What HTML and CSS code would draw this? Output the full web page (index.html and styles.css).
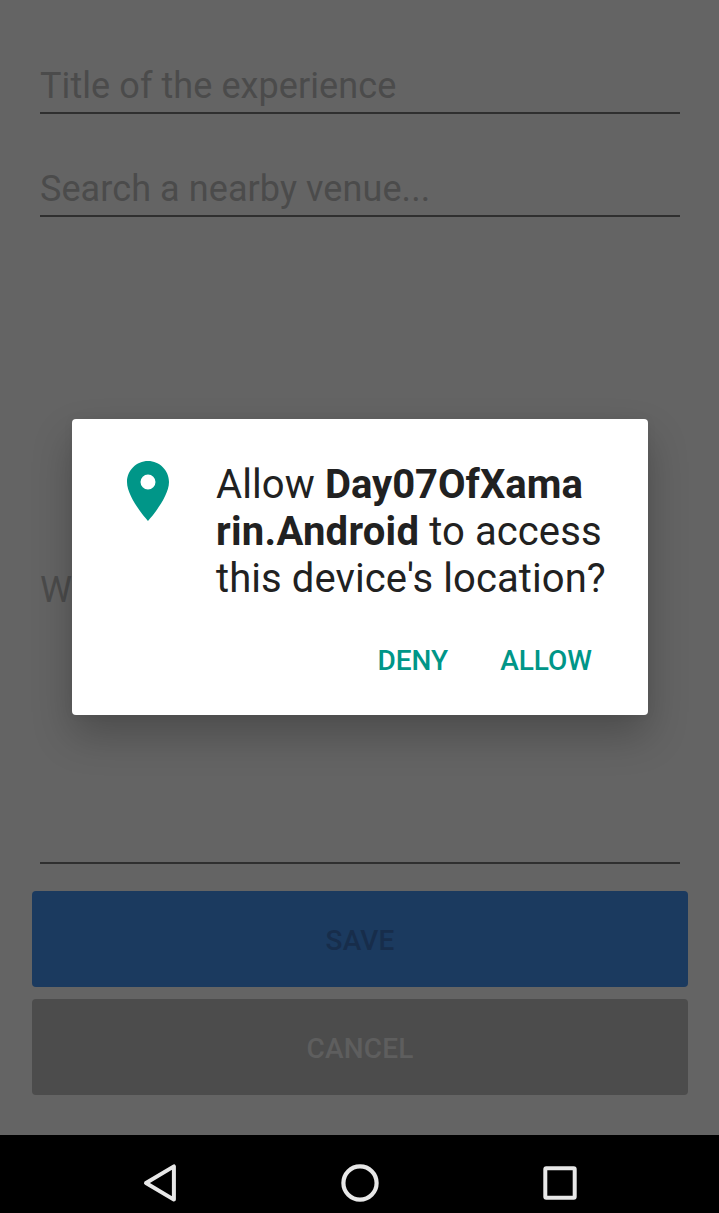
FILE: index.html
```html
<!DOCTYPE html>
<html lang="en">
<head>
<meta charset="utf-8">
<title>New experience</title>
<link rel="stylesheet" href="styles.css">
</head>
<body>
<div class="screen">
  <main class="form">
    <div class="field">Title of the experience</div>
    <div class="field">Search a nearby venue...</div>
    <div class="field field-message">W</div>
    <div class="actions">
      <button class="button button-save">SAVE</button>
      <button class="button button-cancel">CANCEL</button>
    </div>
  </main>
  <nav class="navbar">
    <svg class="nav-icon" viewBox="0 0 48 48"><path d="M10 24 37.9 7.4V40.6Z" fill="none" stroke="#e8e8e8" stroke-width="4" stroke-linejoin="round"/></svg>
    <svg class="nav-icon" viewBox="0 0 48 48"><circle cx="24" cy="24" r="16.6" fill="none" stroke="#e8e8e8" stroke-width="4.2"/></svg>
    <svg class="nav-icon" viewBox="0 0 48 48"><rect x="9.3" y="9.3" width="29.4" height="29.4" rx="1" fill="none" stroke="#e8e8e8" stroke-width="4"/></svg>
  </nav>
  <section class="dialog" role="dialog">
    <div class="dialog-body">
      <svg class="pin" viewBox="5 2 14 20"><path fill="#009688" d="M12 2C8.13 2 5 5.13 5 9c0 5.25 7 13 7 13s7-7.75 7-13c0-3.87-3.13-7-7-7zm0 9.5a2.5 2.5 0 0 1 0-5 2.5 2.5 0 0 1 0 5z"/></svg>
      <p class="dialog-text">Allow <b>Day07OfXama<br><span class="loose">rin.Android</span></b> to access<br>this device's location?</p>
    </div>
    <div class="dialog-actions">
      <span>DENY</span>
      <span>ALLOW</span>
    </div>
  </section>
</div>
</body>
</html>
```
FILE: styles.css
```css
* { box-sizing: border-box; }
body {
  margin: 0;
  font-family: Roboto, sans-serif;
  background: #646464;
}
.screen {
  position: relative;
  display: flex;
  flex-direction: column;
  width: 719px;
  height: 1213px;
  overflow: hidden;
  background: #646464;
}
.form {
  display: flex;
  flex-direction: column;
  height: 1135px;
  padding: 65px 31px 0 32px;
}
.field {
  margin: 0 8px 54px;
  padding-bottom: 5px;
  border-bottom: 2px solid #2f2f2f;
  font-size: 36px;
  line-height: 42px;
  letter-spacing: .08px;
  color: #4b4b4b;
}
.field-message {
  display: flex;
  align-items: center;
  height: 593px;
  margin-bottom: 27px;
  padding: 47px 0 0;
}
.actions {
  display: flex;
  flex-direction: column;
  gap: 12px;
}
.button {
  height: 96px;
  padding: 3px 0 0;
  border: 0;
  border-radius: 4px;
  font: 500 28px/33px Roboto, sans-serif;
  letter-spacing: .15px;
}
.button-save { background: #1b3a5f; color: #172d4b; }
.button-cancel { background: #4c4c4c; color: #5e5e5e; }
.navbar {
  display: flex;
  justify-content: space-between;
  height: 78px;
  padding: 24px 135px 0 136px;
  background: #000;
}
.nav-icon { width: 48px; height: 48px; }
.dialog {
  position: absolute;
  left: 72px;
  top: 419px;
  width: 576px;
  height: 296px;
  padding-top: 42px;
  border-radius: 4px;
  background: #fff;
  box-shadow: 0 20px 40px rgba(0, 0, 0, .24), 0 0 12px rgba(0, 0, 0, .04);
}
.dialog-body {
  display: flex;
  gap: 47px;
  padding-left: 55px;
}
.pin { width: 42px; height: 60px; }
.dialog-text {
  margin: 0;
  font-size: 40px;
  line-height: 47px;
  letter-spacing: .09px;
  color: #212121;
  white-space: nowrap;
}
.dialog-text b { letter-spacing: 0; }
.dialog-text .loose { letter-spacing: .28px; }
.dialog-actions {
  display: flex;
  justify-content: flex-end;
  gap: 52px;
  padding: 42px 56px 0 0;
  font-weight: 500;
  font-size: 28px;
  line-height: 33px;
  color: #009688;
}
```
